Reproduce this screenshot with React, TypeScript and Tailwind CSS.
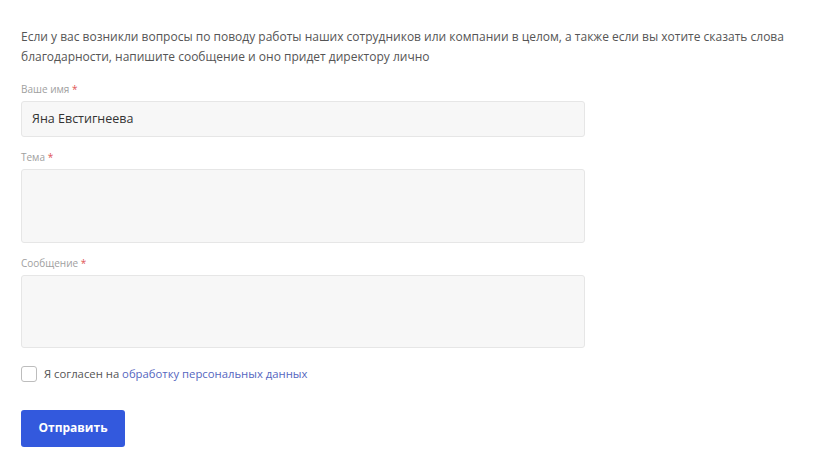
export default function App() {
  return (
    <div
      className="w-[830px] h-[469px] bg-white pl-[21px] pt-[27px]"
      style={{ fontFamily: '"Open Sans", "Noto Sans", sans-serif' }}
    >
      <p className="text-[12px] leading-[20px] text-[#555] w-[785px]">
        Если у вас возникли вопросы по поводу работы наших сотрудников или компании в целом, а также если вы хотите сказать слова благодарности, напишите сообщение и оно придет директору лично
      </p>

      <form className="mt-[15px] w-[564px] flex flex-col" onSubmit={(e) => e.preventDefault()}>
        <label className="text-[10px] leading-[14px] text-[#a0a0a0]">
          Ваше имя <span className="text-[#e05555]">*</span>
        </label>
        <div className="mt-[5px] h-[36px] rounded-[3px] border border-[#e6e6e6] bg-[#f7f7f7] px-[10px] flex items-center text-[12.5px] text-[#333]">
          Яна Евстигнеева
        </div>

        <label className="mt-[13px] text-[10px] leading-[14px] text-[#a0a0a0]">
          Тема <span className="text-[#e05555]">*</span>
        </label>
        <div className="mt-[5px] h-[74px] rounded-[3px] border border-[#e6e6e6] bg-[#f7f7f7]" />

        <label className="mt-[13px] text-[10px] leading-[14px] text-[#a0a0a0]">
          Сообщение <span className="text-[#e05555]">*</span>
        </label>
        <div className="mt-[5px] h-[73px] rounded-[3px] border border-[#e6e6e6] bg-[#f7f7f7]" />

        <div className="mt-[18px] flex items-center gap-[7px]">
          <span className="w-[16px] h-[16px] rounded-[3px] border border-[#bdbdbd] bg-white" />
          <span className="text-[11.3px] text-[#555]">
            Я согласен на <span className="text-[#5566c0]">обработку персональных данных</span>
          </span>
        </div>

        <button
          type="submit"
          className="mt-[27px] w-[104px] h-[37px] rounded-[3px] bg-[#3359dd] text-white text-[12px] font-bold"
        >
          Отправить
        </button>
      </form>
    </div>
  );
}
